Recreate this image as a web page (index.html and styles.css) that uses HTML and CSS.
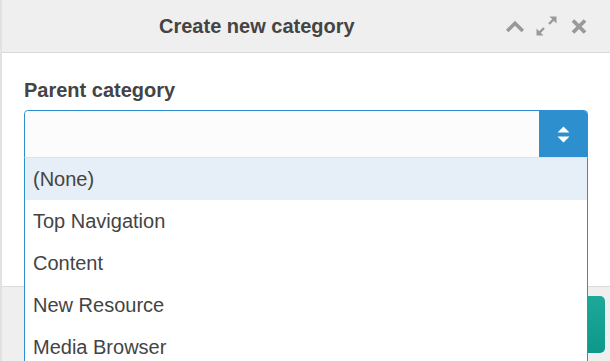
FILE: index.html
```html
<!DOCTYPE html>
<html lang="en">
<head>
    <meta charset="UTF-8">
    <title>Create new category</title>
    <link rel="stylesheet" href="styles.css">
</head>
<body>
    <div class="dialog">
        <div class="dialog-header">
            <h2 class="dialog-title">Create new category</h2>
            <div class="dialog-tools">
                <svg class="tool-collapse" width="20" height="14" viewBox="0 0 20 14"><path d="M2.2 12 L10 4.2 L17.8 12" fill="none" stroke="#999" stroke-width="3.6"/></svg>
                <svg class="tool-expand" width="21" height="20" viewBox="0 0 21 20">
                    <path d="M8 12 L3 17" stroke="#999" stroke-width="2.4"/>
                    <path d="M0.5 19.5 L0.5 12.5 L7.5 19.5 Z" fill="#999"/>
                    <path d="M13 8 L18 3" stroke="#999" stroke-width="2.4"/>
                    <path d="M20.5 0.5 L13.5 0.5 L20.5 7.5 Z" fill="#999"/>
                </svg>
                <svg class="tool-close" width="16" height="15" viewBox="0 0 16 15"><path d="M2 1.5 L14 13.5 M14 1.5 L2 13.5" stroke="#999" stroke-width="3.8"/></svg>
            </div>
        </div>

        <div class="dialog-body">
            <label class="field-label">Parent category</label>
            <div class="select open">
                <div class="select-value"></div>
                <div class="select-button">
                    <svg width="13" height="17" viewBox="0 0 13 17"><path d="M0.5 6.5 L6.5 0.5 L12.5 6.5 Z M0.5 10.5 L6.5 16.5 L12.5 10.5 Z" fill="#fff"/></svg>
                </div>
                <ul class="select-list">
                    <li class="active">(None)</li>
                    <li>Top Navigation</li>
                    <li>Content</li>
                    <li>New Resource</li>
                    <li>Media Browser</li>
                </ul>
            </div>
        </div>

        <div class="dialog-footer">
            <button class="btn-save">Save</button>
        </div>
    </div>
</body>
</html>
```

FILE: styles.css
```css
* {
    margin: 0;
    padding: 0;
    box-sizing: border-box;
}

body {
    font-family: "Liberation Sans", Arial, sans-serif;
    background: #fff;
    color: #444;
    overflow: hidden;
}

.dialog {
    border-left: 2px solid #e2e2e2;
    height: 361px;
}

.dialog-header {
    height: 53px;
    background: #efefef;
    border-bottom: 1px solid #d9d9d9;
    display: flex;
    align-items: center;
    padding-left: 157px;
    padding-right: 23px;
}

.dialog-title {
    font-size: 20px;
    font-weight: bold;
    color: #444;
    flex: 1;
}

.dialog-tools {
    display: flex;
    align-items: center;
}

.tool-collapse {
    margin-right: 11px;
}

.tool-expand {
    margin-right: 14px;
}

.dialog-body {
    height: 233px;
    padding: 26px 22px 0;
}

.field-label {
    display: block;
    font-size: 20px;
    line-height: 23px;
    font-weight: bold;
    color: #444;
    margin-bottom: 8px;
}

.select {
    position: relative;
    display: flex;
    height: 48px;
    border: 1px solid #2d8fcf;
    border-radius: 4px 4px 0 0;
}

.select-value {
    flex: 1;
    background: #fcfcfd;
    border-radius: 4px 0 0 0;
}

.select-button {
    width: 48px;
    background: #2e8fcf;
    display: flex;
    align-items: center;
    justify-content: center;
    border-radius: 0 3px 0 0;
}

.select-list {
    position: absolute;
    top: 46px;
    left: -1px;
    right: -1px;
    list-style: none;
    background: #fff;
    border: 1px solid #2d8fcf;
    border-top-color: #d6e3f0;
    z-index: 2;
}

.select-list li {
    height: 42px;
    line-height: 43px;
    padding-left: 8px;
    font-size: 20px;
    color: #444;
}

.select-list li.active {
    background: #e6eef8;
}

.dialog-footer {
    height: 75px;
    background: #efefef;
    border-top: 1px solid #dcdcdc;
    display: flex;
    justify-content: flex-end;
    padding: 9px 5px 0 0;
}

.btn-save {
    width: 120px;
    height: 57px;
    border: none;
    border-radius: 5px;
    background: linear-gradient(#1ea898, #0e988a);
    color: #fff;
    font-size: 16px;
}
```
